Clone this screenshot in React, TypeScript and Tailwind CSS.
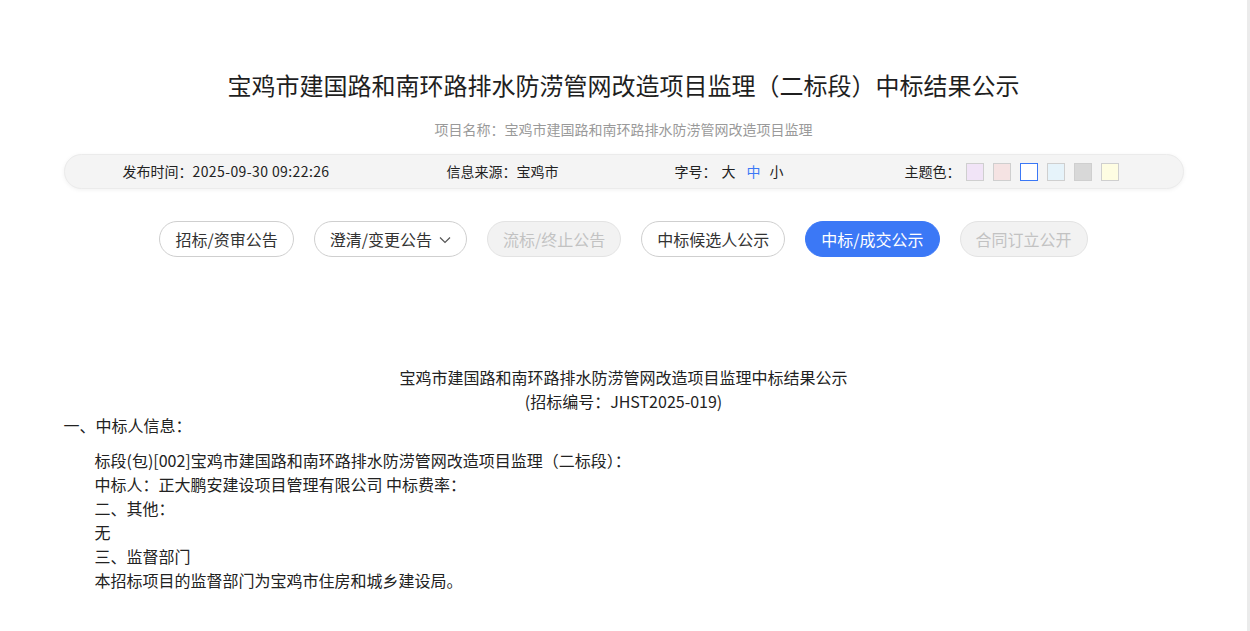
import React from "react";

const font = { fontFamily: '"Noto Sans CJK SC", "Noto Sans", sans-serif' };

function Btn({ label, kind = "normal", chevron = false }: { label: string; kind?: "normal" | "disabled" | "active"; chevron?: boolean }) {
  const cls =
    kind === "active"
      ? "bg-[#3b78f6] border-[#3b78f6] text-white"
      : kind === "disabled"
      ? "bg-[#f2f2f2] border-[#e3e3e3] text-[#c2c2c2]"
      : "bg-white border-[#cfcfcf] text-[#333]";
  return (
    <div className={`h-[36px] px-[15px] rounded-full border flex items-center text-[16px] leading-none ${cls}`}>
      <span>{label}</span>
      {chevron && (
        <svg width="12" height="8" viewBox="0 0 12 8" className="ml-[7px] mt-[1px]">
          <path d="M1 1.5 L6 6.5 L11 1.5" fill="none" stroke="#555" strokeWidth="1.2" />
        </svg>
      )}
    </div>
  );
}

export default function App() {
  const swatches = [
    { bg: "bg-[#f1e4f7]", border: "border-[#cfcfcf]" },
    { bg: "bg-[#f5e3e3]", border: "border-[#cfcfcf]" },
    { bg: "bg-white", border: "border-[#3b78f6]" },
    { bg: "bg-[#e6f3fa]", border: "border-[#cfcfcf]" },
    { bg: "bg-[#d8d8d8]", border: "border-[#cfcfcf]" },
    { bg: "bg-[#fefde2]", border: "border-[#cfcfcf]" },
  ];
  return (
    <div className="flex w-[1250px] h-[631px] overflow-hidden bg-white text-[#222]" style={font}>
      <div className="w-[1247px] h-full">
        <div className="w-[1120px] mx-auto">
          <h1 className="mt-[67px] text-center text-[24px] leading-[36px] font-normal text-[#1f1f1f]">
            宝鸡市建国路和南环路排水防涝管网改造项目监理（二标段）中标结果公示
          </h1>
          <div className="mt-[16px] text-center text-[14px] leading-[20px] text-[#9a9a9a]">
            项目名称：宝鸡市建国路和南环路排水防涝管网改造项目监理
          </div>
          <div className="mt-[15px] h-[35px] rounded-full bg-[#f4f4f4] border border-[#ebebeb] shadow-[0_1px_4px_rgba(0,0,0,0.06)] flex items-center pl-[58px] text-[14px] text-[#222]">
            <div className="w-[324px]">
              发布时间：<span className="tracking-[0.4px]">2025-09-30 09:22:26</span>
            </div>
            <div className="w-[228px]">信息来源：宝鸡市</div>
            <div className="w-[230px] flex items-center">
              <span>字号：</span>
              <span className="ml-[5px]">大</span>
              <span className="ml-[11px] text-[#3b78f6]">中</span>
              <span className="ml-[9px]">小</span>
            </div>
            <div className="flex items-center">
              <span>主题色：</span>
              <div className="ml-[5px] mt-[1px] flex items-center gap-[9px]">
                {swatches.map((s, i) => (
                  <div key={i} className={`w-[18px] h-[18px] border ${s.bg} ${s.border}`} />
                ))}
              </div>
            </div>
          </div>
          <div className="mt-[32px] flex justify-center gap-[20px]">
            <Btn label="招标/资审公告" />
            <Btn label="澄清/变更公告" chevron />
            <Btn label="流标/终止公告" kind="disabled" />
            <Btn label="中标候选人公示" />
            <Btn label="中标/成交公示" kind="active" />
            <Btn label="合同订立公开" kind="disabled" />
          </div>
          <div className="mt-[108px] text-[16px] leading-[24px] text-[#222]">
            <div className="text-center">宝鸡市建国路和南环路排水防涝管网改造项目监理中标结果公示</div>
            <div className="text-center">(招标编号：JHST2025-019)</div>
            <div>一、中标人信息：</div>
            <div className="mt-[11px] pl-[31px]">
              <div>标段(包)[002]宝鸡市建国路和南环路排水防涝管网改造项目监理（二标段）：</div>
              <div>中标人：正大鹏安建设项目管理有限公司 中标费率：</div>
              <div>二、其他：</div>
              <div>无</div>
              <div>三、监督部门</div>
              <div>本招标项目的监督部门为宝鸡市住房和城乡建设局。</div>
            </div>
          </div>
        </div>
      </div>
      <div className="w-[3px] h-full bg-[#ebebeb]" />
    </div>
  );
}
